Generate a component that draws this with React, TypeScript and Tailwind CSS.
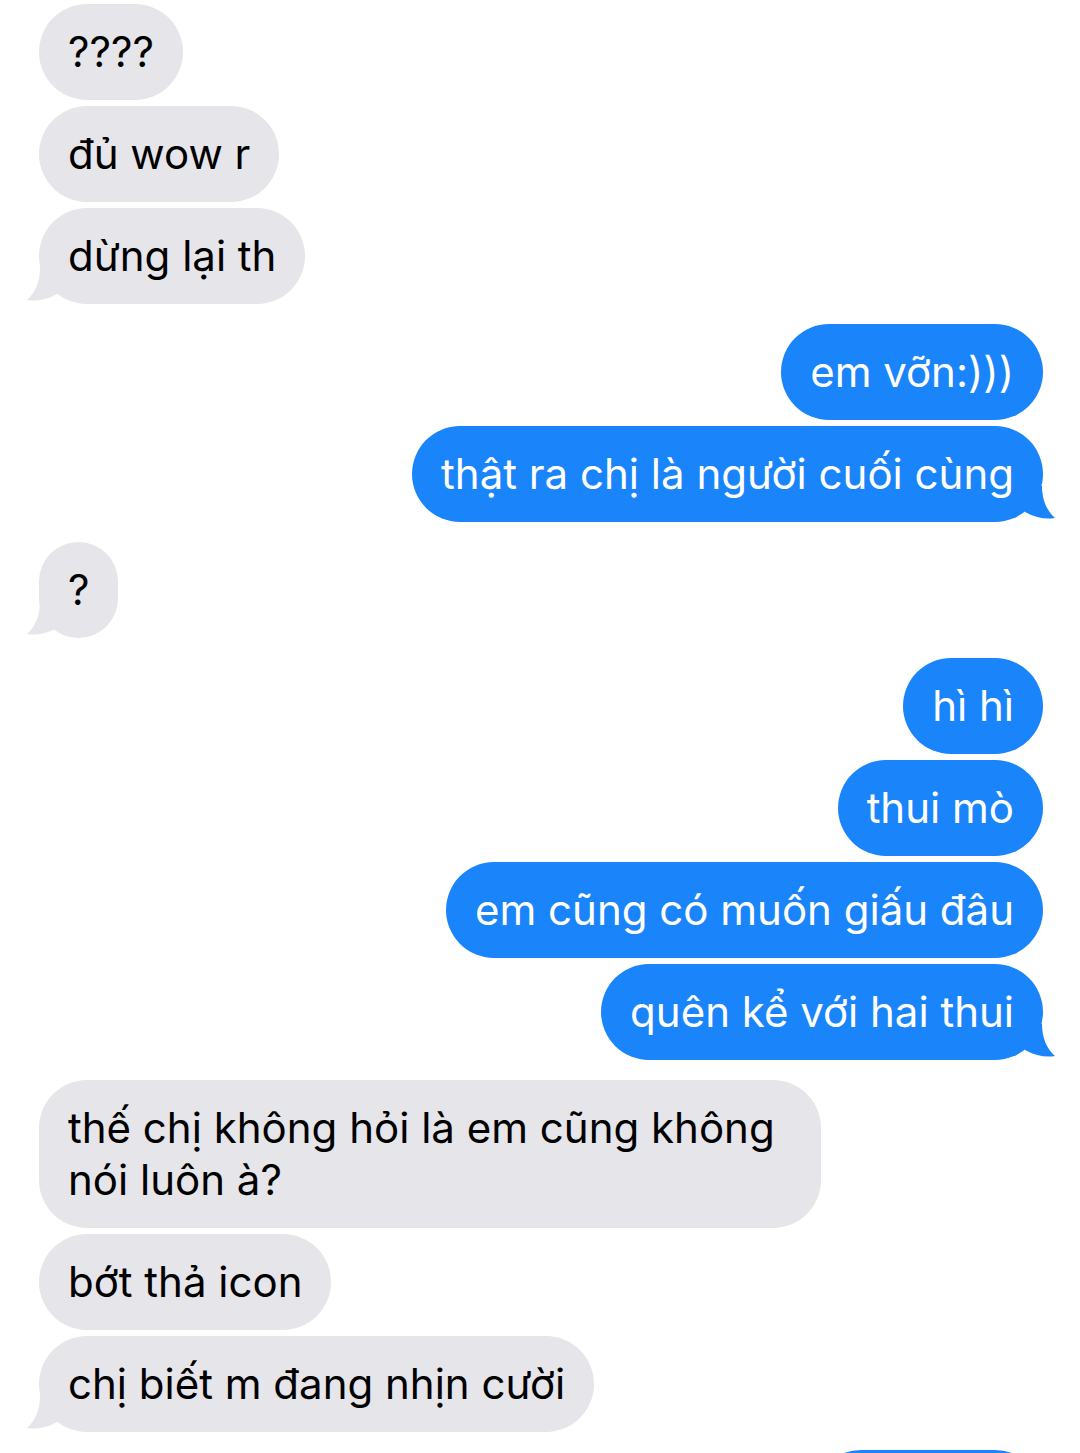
import React from "react";

type Msg = { text: string; me: boolean; tail?: boolean; gapTop?: boolean };

const messages: Msg[] = [
  { text: "????", me: false },
  { text: "đủ wow r", me: false },
  { text: "dừng lại th", me: false, tail: true },
  { text: "em vỡn:)))", me: true, gapTop: true },
  { text: "thật ra chị là người cuối cùng", me: true, tail: true },
  { text: "?", me: false, tail: true, gapTop: true },
  { text: "hì hì", me: true, gapTop: true },
  { text: "thui mò", me: true },
  { text: "em cũng có muốn giấu đâu", me: true },
  { text: "quên kể với hai thui", me: true, tail: true },
  { text: "thế chị không hỏi là em cũng không nói luôn à?", me: false, gapTop: true },
  { text: "bớt thả icon", me: false },
  { text: "chị biết m đang nhịn cười", me: false, tail: true },
];

// little curled tail on the last bubble of a group
const Tail = ({ me }: { me: boolean }) => (
  <svg
    width="40"
    height="36"
    viewBox="0 0 40 36"
    className={`absolute bottom-0 ${me ? "-right-[12px] -scale-x-100" : "-left-[12px]"}`}
  >
    <path
      d="M13 0 C13 14 8 25 0 32 C9 33.5 19 32 29 26.5 L40 18 L40 0 Z"
      fill={me ? "#1a84fb" : "#e5e5ea"}
    />
  </svg>
);

const Bubble = ({ msg, first }: { msg: Msg; first: boolean }) => (
  <div
    className={`flex ${msg.me ? "justify-end pr-[37px]" : "justify-start pl-[39px]"} ${
      first ? "" : msg.gapTop ? "mt-[20px]" : "mt-[6px]"
    }`}
  >
    <div
      className={`relative max-w-[782px] rounded-[48px] px-[29px] py-[22px] text-[42px] leading-[52px] ${
        msg.me ? "bg-[#1a84fb] text-white" : "bg-[#e5e5ea] text-black"
      }`}
    >
      {msg.tail && <Tail me={msg.me} />}
      <span className="relative">{msg.text}</span>
    </div>
  </div>
);

export default function App() {
  return (
    <div
      className="w-[1080px] h-[1453px] overflow-hidden bg-white pt-[4px]"
      style={{ fontFamily: "Inter, 'Noto Sans', sans-serif" }}
    >
      {messages.map((m, i) => (
        <Bubble key={i} msg={m} first={i === 0} />
      ))}
      <div className="flex justify-end pr-[37px] mt-[18px]">
        <div className="w-[230px] h-[96px] rounded-[48px] bg-[#1a84fb]" />
      </div>
    </div>
  );
}
